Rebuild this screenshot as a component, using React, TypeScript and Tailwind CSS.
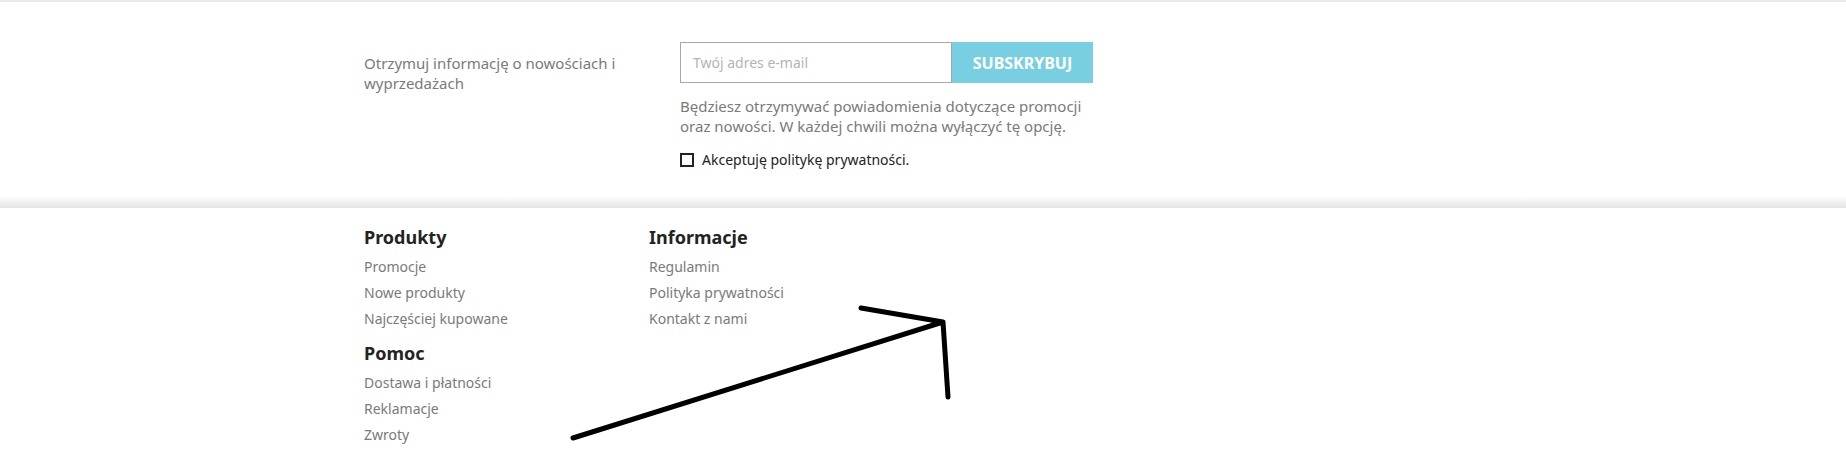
const productLinks = ["Promocje", "Nowe produkty", "Najczęściej kupowane"];
const helpLinks = ["Dostawa i płatności", "Reklamacje", "Zwroty"];
const infoLinks = ["Regulamin", "Polityka prywatności", "Kontakt z nami"];

function LinkList({ title, links, className = "" }: { title: string; links: string[]; className?: string }) {
  return (
    <div className={className}>
      <h4 className="mb-[5px] text-[18px] font-bold leading-[24px] text-[#232323]">{title}</h4>
      <ul>
        {links.map((link) => (
          <li key={link}>
            <a href="#" className="block text-[14px] leading-[26px] text-[#7a7a7a]">
              {link}
            </a>
          </li>
        ))}
      </ul>
    </div>
  );
}

export default function App() {
  return (
    <div className="relative min-h-[460px] w-full bg-white font-['Noto_Sans',sans-serif]">
      <div className="border-t-2 border-[#ebebeb]">
        {/* newsletter */}
        <div className="mx-auto flex w-[1118px] pb-[26px] pt-[40px]">
          <p className="mt-[11px] w-[316px] pr-[40px] text-[15px] leading-[20px] text-[#7a7a7a]">
            Otrzymuj informację o nowościach i wyprzedażach
          </p>

          <div className="w-[413px]">
            <form className="flex h-[41px]">
              <input
                type="email"
                placeholder="Twój adres e-mail"
                className="h-full w-[272px] border border-[#a8a8a8] bg-white px-[12px] text-[14px] text-[#232323] outline-none placeholder:text-[#b4b4b4]"
              />
              <button
                type="button"
                className="h-full w-[141px] bg-[#78cfe1] text-[16px] font-bold uppercase text-white"
              >
                Subskrybuj
              </button>
            </form>

            <p className="mt-[13px] text-[15px] leading-[20px] text-[#7a7a7a]">
              Będziesz otrzymywać powiadomienia dotyczące promocji oraz nowości. W każdej chwili można wyłączyć tę opcję.
            </p>

            <label className="mt-[14px] flex items-center gap-[8px] text-[14px] leading-[20px] text-[#232323]">
              <span className="h-[14px] w-[14px] border-2 border-[#232323]" />
              Akceptuję politykę prywatności.
            </label>
          </div>
        </div>

        <div className="h-[12px] bg-gradient-to-b from-white to-[#e3e3e3]" />

        {/* footer links */}
        <div className="mx-auto flex w-[1118px] pt-[17px]">
          <div className="w-[285px]">
            <LinkList title="Produkty" links={productLinks} />
            <LinkList title="Pomoc" links={helpLinks} className="mt-[9px]" />
          </div>
          <LinkList title="Informacje" links={infoLinks} />
        </div>
      </div>

      {/* hand-drawn arrow */}
      <svg
        className="pointer-events-none absolute left-0 top-0"
        width="1846"
        height="460"
        viewBox="0 0 1846 460"
        fill="none"
      >
        <path
          d="M573 438 L943 322 L948 397 M861 308 L943 322"
          stroke="#000"
          strokeWidth="5"
          strokeLinecap="round"
          strokeLinejoin="round"
        />
      </svg>
    </div>
  );
}
